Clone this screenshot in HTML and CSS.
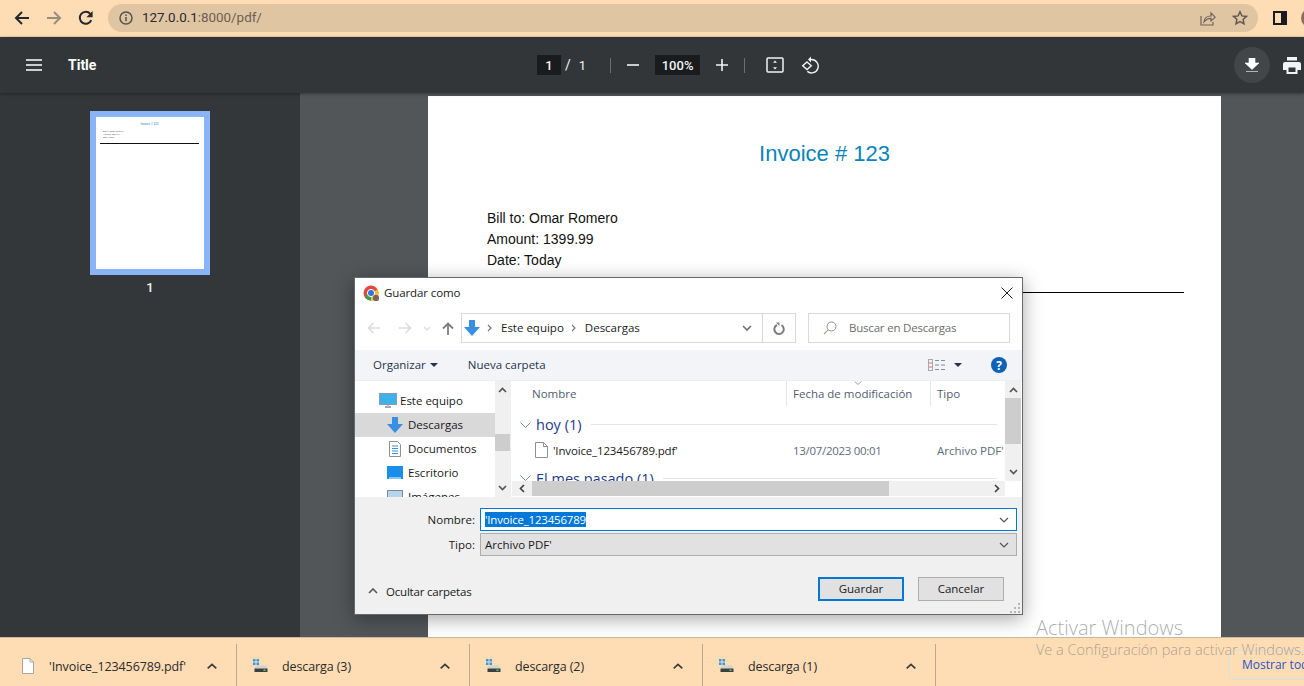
FILE: index.html
```html
<!DOCTYPE html>
<html lang="en">
  <head>
    <meta charset="UTF-8" />
    <title>Guardar como</title>
    <link rel="stylesheet" href="styles.css">
  </head>
  <body>
    <header class="browser-bar">
      <svg class="nav-icon" width="16" height="16" viewBox="0 0 16 16"><path d="M15 8H2M8 2 2 8l6 6" fill="none" stroke="#26282b" stroke-width="2"/></svg>
      <svg class="nav-icon" width="16" height="16" viewBox="0 0 16 16"><path d="M1 8h13M8 2l6 6-6 6" fill="none" stroke="#9b8c7b" stroke-width="2"/></svg>
      <svg class="nav-icon" width="16" height="16" viewBox="0 0 16 16"><path d="M13.3 10.2A6 6 0 1 1 12.3 3.8" fill="none" stroke="#26282b" stroke-width="2"/><path d="M14.6 1v6.2H8.4z" fill="#26282b"/></svg>
      <div class="omnibox">
        <svg width="14" height="14" viewBox="0 0 14 14"><circle cx="7" cy="7" r="6" fill="none" stroke="#55534f" stroke-width="1.5"/><path d="M7 6v4.2M7 3.6v1.3" stroke="#55534f" stroke-width="1.5"/></svg>
        <span class="url"><b>127.0.0.1</b>:8000/pdf/</span>
        <svg class="share" width="16" height="16" viewBox="0 0 16 16"><path d="M1 6v9h12v-3" fill="none" stroke="#6d665d" stroke-width="1.2"/><path d="M4 12c.4-4 3-6 7-6V3l4.200 4.200L11 11V8.300c-3 0-5 1-7 3.700z" fill="none" stroke="#6d665d" stroke-width="1.200"/></svg>
        <svg class="star" width="16" height="16" viewBox="0 0 16 16"><path d="m8 1.800 1.900 4.100 4.500.5-3.300 3 .9 4.400L8 11.600l-4 2.200.9-4.400-3.300-3 4.500-.5z" fill="none" stroke="#5f5a53" stroke-width="1.500"/></svg>
      </div>
      <span class="side-panel"></span>
      <span class="avatar"></span>
    </header>

    <div class="pdf-toolbar">
      <svg class="burger" width="16" height="12" viewBox="0 0 16 12"><path d="M0 1h16M0 6h16M0 11h16" stroke="#fff" stroke-width="1.600"/></svg>
      <span class="doc-title">Title</span>
      <span class="field page-field">1</span>
      <span class="slash">/</span>
      <span class="page-count">1</span>
      <span class="tb-sep first-sep"></span>
      <svg class="minus" width="12" height="12" viewBox="0 0 12 12"><path d="M0 6h12" stroke="#f1f3f4" stroke-width="1.600"/></svg>
      <span class="field zoom-field">100%</span>
      <svg class="plus" width="12" height="12" viewBox="0 0 12 12"><path d="M0 6h12M6 0v12" stroke="#f1f3f4" stroke-width="1.600"/></svg>
      <span class="tb-sep second-sep"></span>
      <svg class="fit" width="18" height="16" viewBox="0 0 18 16"><rect x="1" y="1" width="16" height="14" rx="1" fill="none" stroke="#f1f3f4" stroke-width="1.500"/><path d="m9 3.500 2 2.300H7zM9 12.500l2-2.300H7z" fill="#f1f3f4"/></svg>
      <svg class="rotate" width="19" height="18" viewBox="0 0 19 18"><path d="M9 3.500h1.500a6.700 6.700 0 1 1-4.200 11.900" fill="none" stroke="#f1f3f4" stroke-width="1.400"/><path d="M10 .5v6L7 3.500z" fill="#f1f3f4"/><path d="m6 6 4.300 3.800L6 13.600 1.700 9.800z" fill="none" stroke="#f1f3f4" stroke-width="1.400"/></svg>
      <span class="download-btn">
        <svg width="14" height="15" viewBox="0 0 14 15"><path d="M4 0h6v5h4l-7 6.500L0 5h4zM1 13.500h12" fill="#fff" stroke="#fff" stroke-width=".6"/></svg>
      </span>
      <svg class="print" width="18" height="17" viewBox="0 0 18 17"><path d="M4 0h10v3.500H4zM2 5h14a2 2 0 0 1 2 2v6h-3.500v4h-11v-4H0V7a2 2 0 0 1 2-2z" fill="#f1f3f4"/><path d="M5.500 10.500h7v4.500h-7z" fill="#323639"/></svg>
    </div>

    <main class="viewer">
      <aside class="sidebar">
        <div class="thumb">
          <div class="thumb-title">Invoice # 123</div>
          <div class="thumb-line">Bill to: Omar Romero</div>
          <div class="thumb-line">Amount: 1399.99</div>
          <div class="thumb-line">Date: Today</div>
          <div class="thumb-rule"></div>
        </div>
        <div class="thumb-label">1</div>
      </aside>
      <section class="pdf-area">
        <article class="pdf-page">
          <h1 class="invoice-title">Invoice # 123</h1>
          <p class="invoice-line">Bill to: Omar Romero</p>
          <p class="invoice-line">Amount: 1399.99</p>
          <p class="invoice-line">Date: Today</p>
          <hr class="invoice-rule" />
        </article>
      </section>
    </main>

    <footer class="shelf">
      <div class="shelf-item first-item">
        <svg class="shelf-file" width="12" height="16" viewBox="0 0 12 16"><path d="M.5.500h7.500l3.500 3.500v11.500H.5z" fill="#fff" stroke="#a6a6a6"/><path d="M8 .5V4h3.500" fill="none" stroke="#a6a6a6"/></svg>
        <span class="shelf-name">'Invoice_123456789.pdf'</span>
        <svg class="shelf-chev" width="10" height="6" viewBox="0 0 10 6"><path d="m.7 5.300 4.300-4 4.300 4" fill="none" stroke="#3a3a3a" stroke-width="1.700"/></svg>
      </div>
      <div class="shelf-item">
        <svg class="shelf-drive" width="16" height="14" viewBox="0 0 16 14"><path d="M0 0h2.500v2.500H0zM3.500 0H6v2.500H3.500zM0 3.500h2.500V6H0zM3.500 3.500H6V6H3.500z" fill="#2f9be8"/><path d="M3 6.500h10l1.500 3H1.500z" fill="#d2d2d2"/><path d="M1.500 9.500h13v3.500h-13z" fill="#3c3f3f"/><path d="M10.500 10.500h2V12h-2z" fill="#55d36b"/></svg>
        <span class="shelf-name">descarga (3)</span>
        <svg class="shelf-chev" width="10" height="6" viewBox="0 0 10 6"><path d="m.7 5.300 4.300-4 4.300 4" fill="none" stroke="#3a3a3a" stroke-width="1.700"/></svg>
      </div>
      <div class="shelf-item">
        <svg class="shelf-drive" width="16" height="14" viewBox="0 0 16 14"><path d="M0 0h2.500v2.500H0zM3.500 0H6v2.500H3.500zM0 3.500h2.500V6H0zM3.500 3.500H6V6H3.500z" fill="#2f9be8"/><path d="M3 6.500h10l1.500 3H1.500z" fill="#d2d2d2"/><path d="M1.500 9.500h13v3.500h-13z" fill="#3c3f3f"/><path d="M10.500 10.500h2V12h-2z" fill="#55d36b"/></svg>
        <span class="shelf-name">descarga (2)</span>
        <svg class="shelf-chev" width="10" height="6" viewBox="0 0 10 6"><path d="m.7 5.300 4.300-4 4.300 4" fill="none" stroke="#3a3a3a" stroke-width="1.700"/></svg>
      </div>
      <div class="shelf-item">
        <svg class="shelf-drive" width="16" height="14" viewBox="0 0 16 14"><path d="M0 0h2.500v2.500H0zM3.500 0H6v2.500H3.500zM0 3.500h2.500V6H0zM3.500 3.500H6V6H3.500z" fill="#2f9be8"/><path d="M3 6.500h10l1.500 3H1.500z" fill="#d2d2d2"/><path d="M1.500 9.500h13v3.500h-13z" fill="#3c3f3f"/><path d="M10.500 10.500h2V12h-2z" fill="#55d36b"/></svg>
        <span class="shelf-name">descarga (1)</span>
        <svg class="shelf-chev" width="10" height="6" viewBox="0 0 10 6"><path d="m.7 5.300 4.300-4 4.300 4" fill="none" stroke="#3a3a3a" stroke-width="1.700"/></svg>
      </div>
      <span class="show-all">Mostrar todo</span>
    </footer>

    <div class="watermark">
      <div class="wm-big">Activar Windows</div>
      <div class="wm-small">Ve a Configuración para activar Windows.</div>
    </div>

    <div class="dialog">
      <div class="dlg-title">
        <svg width="16" height="16" viewBox="0 0 16 16">
          <circle cx="8" cy="8" r="7.500" fill="#e2483c"/>
          <path d="M8 8 1.500 11.800A7.500 7.500 0 0 0 8 15.500z" fill="#3c9e50"/>
          <path d="M8 8v7.500A7.500 7.500 0 0 0 15.500 8 7 7 0 0 0 14.500 4.500z" fill="#f3c033"/>
          <circle cx="8" cy="8" r="3.600" fill="#2f75e0" stroke="#fff" stroke-width="1"/>
          <rect x="10" y="10" width="6" height="6" rx="2" fill="#80635a"/>
        </svg>
        <span>Guardar como</span>
        <svg class="dlg-close" width="12" height="12" viewBox="0 0 12 12"><path d="m.5.500 11 11M11.500.500l-11 11" stroke="#1a1a1a" stroke-width="1"/></svg>
      </div>

      <div class="dlg-nav">
        <svg class="hist" width="14" height="12" viewBox="0 0 14 12"><path d="M13 6H2M6.500 1 1.500 6l5 5" fill="none" stroke="#dcdcdc" stroke-width="1.600"/></svg>
        <svg class="hist hist-fwd" width="14" height="12" viewBox="0 0 14 12"><path d="M1 6h11M7.500 1l5 5-5 5" fill="none" stroke="#dcdcdc" stroke-width="1.600"/></svg>
        <svg class="hist hist-down" width="8" height="5" viewBox="0 0 8 5"><path d="m1 1 3 3 3-3" fill="none" stroke="#dcdcdc" stroke-width="1.400"/></svg>
        <svg class="hist hist-up" width="12" height="13" viewBox="0 0 12 13"><path d="M6 13V2M1 6.500l5-5 5 5" fill="none" stroke="#7d7d7d" stroke-width="1.800"/></svg>
        <div class="addr">
          <svg width="16" height="16" viewBox="0 0 16 16"><path d="M5 0h6v7h5l-8 9-8-9h5z" fill="#3a8fe0"/></svg>
          <svg class="crumb" width="5" height="8" viewBox="0 0 5 8"><path d="m1 1 3 3-3 3" fill="none" stroke="#7a7a7a" stroke-width="1.200"/></svg>
          <span class="addr-text">Este equipo</span>
          <svg class="crumb" width="5" height="8" viewBox="0 0 5 8"><path d="m1 1 3 3-3 3" fill="none" stroke="#7a7a7a" stroke-width="1.200"/></svg>
          <span class="addr-text">Descargas</span>
          <svg class="addr-chev" width="10" height="6" viewBox="0 0 10 6"><path d="m1 1 4 4 4-4" fill="none" stroke="#6d6d6d" stroke-width="1.600"/></svg>
          <span class="addr-refresh">
            <svg width="12" height="13" viewBox="0 0 12 13"><path d="M8.500 3.200a4.700 4.700 0 1 1-4.500-.2" fill="none" stroke="#7d7d7d" stroke-width="2"/><path d="M3 .5h3.500V4z" fill="#7d7d7d"/></svg>
          </span>
        </div>
        <div class="search">
          <svg width="14" height="14" viewBox="0 0 14 14"><circle cx="8.500" cy="5.500" r="4.500" fill="none" stroke="#8f8f8f"/><path d="M5.200 8.800 1 13" stroke="#c09a7a" stroke-width="1.200"/></svg>
          <span>Buscar en Descargas</span>
        </div>
      </div>

      <div class="dlg-tools">
        <span class="tool-link">Organizar</span>
        <span class="tri"></span>
        <span class="tool-link new-folder">Nueva carpeta</span>
        <svg class="views" width="17" height="12" viewBox="0 0 17 12"><rect x=".5" y=".5" width="4" height="11" fill="none" stroke="#a8a8a8"/><path d="M1 4h3M1 8h3" stroke="#d0717a"/><path d="M7 1.500h4M13 1.500h4M7 6h4M13 6h4M7 10.500h4M13 10.500h4" stroke="#7f8d9c"/></svg>
        <span class="tri views-tri"></span>
        <span class="help">?</span>
      </div>

      <div class="dlg-body">
        <div class="tree">
          <div class="tree-row tree-pc">
            <svg width="18" height="16" viewBox="0 0 18 16"><rect x=".5" y=".5" width="17" height="11" fill="#3fb0ea" stroke="#8a9aa8"/><path d="M6 14h6" stroke="#9aa6b2" stroke-width="2"/><path d="M8 12h2v2H8z" fill="#b8c2cc"/></svg>
            <span>Este equipo</span>
          </div>
          <div class="tree-row selected">
            <svg width="16" height="16" viewBox="0 0 16 16"><path d="M5 0h6v7h5l-8 9-8-9h5z" fill="#3a8fe0"/></svg>
            <span>Descargas</span>
          </div>
          <div class="tree-row">
            <svg width="16" height="16" viewBox="0 0 16 16"><path d="M2.500.5h8l3 3v12h-11z" fill="#fff" stroke="#8f8f8f"/><path d="M5 5h6M5 7.500h6M5 10h6M5 12.500h6" stroke="#3d8fd8"/></svg>
            <span>Documentos</span>
          </div>
          <div class="tree-row">
            <svg width="16" height="14" viewBox="0 0 16 14"><rect width="16" height="13" fill="#1a8ee8"/><path d="M2 12h12" stroke="#fff"/></svg>
            <span>Escritorio</span>
          </div>
          <div class="tree-row">
            <svg width="16" height="14" viewBox="0 0 16 14"><rect x=".5" y=".5" width="15" height="13" fill="#b7d4ee" stroke="#7a8a9a"/></svg>
            <span>Imágenes</span>
          </div>
        </div>
        <div class="vscroll tree-scroll">
          <svg width="9" height="6" viewBox="0 0 9 6"><path d="m1 5 3.500-3.500L8 5" fill="none" stroke="#555" stroke-width="1.700"/></svg>
          <span class="vthumb"></span>
          <svg class="vdown" width="9" height="6" viewBox="0 0 9 6"><path d="m1 1 3.500 3.500L8 1" fill="none" stroke="#555" stroke-width="1.700"/></svg>
        </div>
        <div class="files">
          <div class="files-view">
            <div class="col-head">
              <span class="col col-name">Nombre</span>
              <span class="col col-date">Fecha de modificación</span>
              <span class="col col-type">Tipo</span>
              <svg class="sort" width="8" height="4" viewBox="0 0 8 4"><path d="m.5.500 3.500 3 3.500-3" fill="none" stroke="#a8a8a8"/></svg>
            </div>
            <div class="group">
              <svg width="11" height="6" viewBox="0 0 11 6"><path d="m.5.500 5 5 5-5" fill="none" stroke="#7d8794"/></svg>
              <span>hoy (1)</span>
              <i></i>
            </div>
            <div class="file-row">
              <svg width="13" height="16" viewBox="0 0 13 16"><path d="M.5.500h8l4 4v11H.5z" fill="#fff" stroke="#8f8f8f"/><path d="M8.500.5v4h4" fill="none" stroke="#8f8f8f"/></svg>
              <span class="file-name">'Invoice_123456789.pdf'</span>
              <span class="file-date">13/07/2023 00:01</span>
              <span class="file-type">Archivo PDF'</span>
            </div>
            <div class="group group-month">
              <svg width="11" height="6" viewBox="0 0 11 6"><path d="m.5.500 5 5 5-5" fill="none" stroke="#7d8794"/></svg>
              <span>El mes pasado (1)</span>
              <i></i>
            </div>
          </div>
          <div class="hscroll">
            <svg class="hleft" width="6" height="9" viewBox="0 0 6 9"><path d="M5 1 1.500 4.500 5 8" fill="none" stroke="#444" stroke-width="1.700"/></svg>
            <span class="hthumb"></span>
            <svg class="hright" width="6" height="9" viewBox="0 0 6 9"><path d="m1 1 3.500 3.500L1 8" fill="none" stroke="#444" stroke-width="1.700"/></svg>
          </div>
        </div>
        <div class="vscroll list-scroll">
          <svg width="9" height="6" viewBox="0 0 9 6"><path d="m1 5 3.500-3.500L8 5" fill="none" stroke="#555" stroke-width="1.700"/></svg>
          <span class="vthumb"></span>
          <svg class="vdown" width="9" height="6" viewBox="0 0 9 6"><path d="m1 1 3.500 3.500L8 1" fill="none" stroke="#555" stroke-width="1.700"/></svg>
          <span class="corner"></span>
        </div>
      </div>

      <div class="dlg-foot">
        <div class="form-grid">
          <label>Nombre:</label>
          <div class="combo combo-name">
            <span class="sel">'Invoice_123456789</span>
            <svg width="10" height="6" viewBox="0 0 10 6"><path d="m1 1 4 4 4-4" fill="none" stroke="#555" stroke-width="1.200"/></svg>
          </div>
          <label>Tipo:</label>
          <div class="combo combo-type">
            <span>Archivo PDF'</span>
            <svg width="10" height="6" viewBox="0 0 10 6"><path d="m1 1 4 4 4-4" fill="none" stroke="#555" stroke-width="1.200"/></svg>
          </div>
        </div>
        <div class="foot-actions">
          <svg class="hide-chev" width="10" height="6" viewBox="0 0 10 6"><path d="m1 5 4-4 4 4" fill="none" stroke="#555" stroke-width="1.600"/></svg>
          <span class="hide-folders">Ocultar carpetas</span>
          <button class="btn btn-default">Guardar</button>
          <button class="btn">Cancelar</button>
        </div>
        <svg class="grip" width="11" height="11" viewBox="0 0 11 11"><path d="M8 0h2v2H8zM4 4h2v2H4zM8 4h2v2H8zM0 8h2v2H0zM4 8h2v2H4zM8 8h2v2H8z" fill="#b5b5b5"/></svg>
      </div>
    </div>
  </body>
</html>
```

FILE: styles.css
```css
* {
  box-sizing: border-box;
}
html,
body {
  margin: 0;
  height: 686px;
  overflow: hidden;
}
body {
  position: relative;
  display: flex;
  flex-direction: column;
  width: 1304px;
  font-family: Roboto, sans-serif;
  background: #525659;
}
svg {
  display: block;
  flex: none;
}

/* browser bar */
.browser-bar {
  display: flex;
  align-items: center;
  height: 37px;
  flex: none;
  padding: 0 0 1px 14px;
  background: #fedcb4;
  border-bottom: 1px solid #f0d2ad;
}
.nav-icon {
  margin-right: 16px;
}
.omnibox {
  display: flex;
  align-items: center;
  width: 1150px;
  height: 28px;
  flex: none;
  margin-left: -2px;
  padding-left: 11px;
  border-radius: 14px;
  background: #dfc5a2;
}
.url {
  margin-left: 9px;
  font-size: 13.400px;
  color: #6a5f52;
}
.url b {
  font-weight: 400;
  color: #2a2a2e;
}
.share {
  margin-left: auto;
  margin-right: 16px;
}
.star {
  margin-right: 10px;
}
.side-panel {
  width: 14px;
  height: 14px;
  flex: none;
  margin-left: 15px;
  border: 2px solid #1b1b1f;
  border-right-width: 6px;
  background: #fedcb4;
}
.avatar {
  width: 20px;
  height: 20px;
  margin-left: 14px;
  flex: none;
  border-radius: 50%;
  background: #8b6b60;
}

/* pdf toolbar */
.pdf-toolbar {
  display: flex;
  align-items: center;
  height: 56px;
  flex: none;
  padding-left: 26px;
  background: #323639;
  color: #f1f3f4;
  font-size: 13px;
  box-shadow: 0 1px 3px rgba(0, 0, 0, 0.35);
  position: relative;
  z-index: 1;
}
.doc-title {
  width: 469px;
  margin-left: 26px;
  font-size: 14px;
  font-weight: 700;
  color: #fff;
}
.field {
  display: flex;
  align-items: center;
  justify-content: center;
  height: 20px;
  background: #191b1c;
  font-size: 13px;
  font-weight: 500;
}
.page-field {
  width: 24px;
}
.slash {
  margin-left: 4px;
  font-size: 14px;
}
.page-count {
  margin-left: 8px;
}
.tb-sep {
  width: 1px;
  height: 15px;
  background: #6b6f72;
}
.first-sep {
  margin-left: 24px;
}
.minus {
  margin-left: 16px;
}
.zoom-field {
  width: 45px;
  margin-left: 16px;
}
.plus {
  margin-left: 16px;
}
.second-sep {
  margin-left: 16px;
}
.fit {
  margin-left: 21px;
}
.rotate {
  margin-left: 17px;
}
.download-btn {
  display: flex;
  align-items: center;
  justify-content: center;
  width: 36px;
  height: 36px;
  margin-left: 414px;
  flex: none;
  border-radius: 50%;
  background: #424649;
}
.print {
  margin-left: 13px;
}

/* viewer */
.viewer {
  display: flex;
  flex: 1;
  min-height: 0;
}
.sidebar {
  width: 300px;
  flex: none;
  padding: 18px 0 0 90px;
  background: #33373a;
}
.thumb {
  width: 120px;
  height: 164px;
  padding: 5px 5px 0 4px;
  border: 6px solid #8ab4f8;
  background: #fff;
  overflow: hidden;
}
.thumb-title {
  margin-bottom: 4px;
  text-align: center;
  font: 3px "Liberation Sans", sans-serif;
  color: #0b85b8;
}
.thumb-line {
  height: 3px;
  margin-left: 3px;
  font: 2.200px/3px "Liberation Sans", sans-serif;
  color: #444;
}
.thumb-rule {
  height: 1px;
  margin-top: 4px;
  background: #111;
}
.thumb-label {
  width: 120px;
  margin-top: 5px;
  text-align: center;
  font-size: 13px;
  font-weight: 500;
  color: #f1f3f4;
}
.pdf-area {
  flex: 1;
  padding: 3px 83px 0 128px;
  min-width: 0;
}
.pdf-page {
  height: 600px;
  padding: 44px 37px 0 59px;
  background: #fff;
  font-family: "Liberation Sans", Arial, sans-serif;
}
.invoice-title {
  margin: 0 0 40px;
  font-size: 22px;
  line-height: 28px;
  font-weight: 400;
  text-align: center;
  color: #0a84b8;
  transform: translateX(-11px);
}
.invoice-line {
  margin: 0;
  font-size: 14px;
  line-height: 21px;
  color: #111;
}
.invoice-rule {
  height: 1px;
  margin: 21px 0 0 -29px;
  border: 0;
  background: #000;
}

/* downloads shelf */
.shelf {
  display: flex;
  flex: none;
  height: 49px;
  padding-top: 6px;
  border-top: 1px solid #c9b79e;
  background: #fedcb4;
  font-family: "Open Sans", sans-serif;
  font-size: 12.500px;
  color: #2b2b2b;
  position: relative;
}
.shelf-item {
  display: flex;
  align-items: center;
  width: 233px;
  flex: none;
  padding: 2px 19px 0 16px;
  border-right: 1px solid #bda78d;
}
.first-item {
  width: 237px;
  padding-left: 22px;
}
.shelf-name {
  margin-left: 15px;
  letter-spacing: -0.1px;
}
.shelf-drive + .shelf-name {
  margin-left: 13px;
}
.shelf-chev {
  margin-left: auto;
}
.show-all {
  align-self: flex-start;
  flex: none;
  height: 30px;
  margin: 6px 0 0 293px;
  padding: 6px 12px 0;
  border: 1px solid #d7dfe8;
  border-radius: 4px;
  font-size: 12px;
  line-height: 16px;
  white-space: nowrap;
  color: #2a52c9;
}

.watermark {
  position: absolute;
  left: 1036px;
  top: 615px;
  width: 290px;
  font-family: "Open Sans", sans-serif;
  font-weight: 300;
  color: rgba(120, 120, 120, 0.62);
}
.wm-big {
  font-size: 20px;
  line-height: 25px;
}
.wm-small {
  margin-top: 3px;
  font-size: 14.500px;
  line-height: 14px;
  white-space: nowrap;
}

/* save dialog */
.dialog {
  position: absolute;
  left: 354px;
  top: 277px;
  display: flex;
  flex-direction: column;
  width: 669px;
  height: 338px;
  border: 1px solid #66696c;
  background: #fff;
  box-shadow: 0 4px 18px rgba(0, 0, 0, 0.35);
  font-family: "Open Sans", sans-serif;
  font-size: 11.500px;
  color: #1a1a1a;
}
.dlg-title {
  display: flex;
  align-items: center;
  height: 29px;
  flex: none;
  padding-left: 8px;
  font-size: 11.500px;
  letter-spacing: -0.1px;
}
.dlg-title span {
  margin-left: 5px;
}
.dlg-close {
  margin-left: auto;
  margin-right: 9px;
}
.dlg-nav {
  display: flex;
  align-items: center;
  height: 30px;
  margin-top: 6px;
  flex: none;
  padding-left: 12px;
}
.hist-fwd {
  margin-left: 17px;
}
.hist-down {
  margin-left: 11px;
}
.hist-up {
  margin-left: 11px;
}
.addr {
  display: flex;
  align-items: center;
  gap: 7px;
  width: 335px;
  height: 30px;
  margin-left: 7px;
  padding-left: 2px;
  border: 1px solid #d9d9d9;
}
.addr-text {
  margin: -2px 0 0 2px;
}
.addr-chev {
  margin-left: auto;
  margin-right: 3px;
}
.addr-refresh {
  display: flex;
  align-items: center;
  justify-content: center;
  width: 33px;
  height: 100%;
  border-left: 1px solid #d9d9d9;
}
.search {
  display: flex;
  align-items: center;
  gap: 12px;
  width: 202px;
  height: 30px;
  margin-left: 12px;
  padding-left: 14px;
  border: 1px solid #d9d9d9;
  color: #6d6d6d;
  letter-spacing: -0.2px;
}
.search span {
  margin-top: -2px;
}
.dlg-tools {
  display: flex;
  align-items: center;
  height: 30px;
  margin-top: 7px;
  flex: none;
  padding-left: 18px;
  background: #f3f4f7;
  color: #24344f;
}
.tool-link {
  margin-top: -2px;
}
.tri {
  width: 0;
  height: 0;
  margin-left: 4px;
  border: 4px solid transparent;
  border-top: 4px solid #24344f;
  border-bottom: 0;
}
.new-folder {
  margin-left: 30px;
}
.views {
  margin-left: auto;
}
.views-tri {
  margin-left: 9px;
}
.help {
  display: flex;
  align-items: center;
  justify-content: center;
  width: 16px;
  height: 16px;
  margin: 0 15px 0 29px;
  border-radius: 50%;
  background: #0f62b8;
  color: #fff;
  font-size: 12px;
  font-weight: 700;
}
.dlg-body {
  display: flex;
  height: 117px;
  flex: none;
  border-top: 1px solid #eceef0;
}
.tree {
  width: 140px;
  flex: none;
  padding-top: 8px;
  overflow: hidden;
}
.tree-row {
  display: flex;
  align-items: center;
  gap: 5px;
  height: 24px;
  padding-left: 32px;
}
.tree-row span {
  margin-top: -2px;
}
.tree-pc {
  gap: 3px;
  padding-left: 24px;
}
.selected {
  background: #d9d9d9;
}
.vscroll {
  display: flex;
  flex-direction: column;
  align-items: center;
  width: 15px;
  flex: none;
  padding-top: 6px;
  background: #f0f0f0;
  position: relative;
}
.tree-scroll .vthumb {
  height: 17px;
  margin-top: 41px;
}
.vthumb {
  display: block;
  width: 100%;
  background: #cdcdcd;
}
.vdown {
  margin-top: auto;
  margin-bottom: 6px;
}
.list-scroll {
  width: 16px;
  background: #f0f0f0;
}
.list-scroll .vthumb {
  height: 46px;
  margin-top: 5px;
}
.list-scroll .vdown {
  margin-bottom: 22px;
}
.corner {
  position: absolute;
  left: 0;
  bottom: 0;
  width: 100%;
  height: 16px;
  background: #fff;
}
.files {
  display: flex;
  flex-direction: column;
  width: 495px;
  flex: none;
  padding-left: 1px;
  border-left: 1px solid #eceef0;
  background: #fff;
}
.files-view {
  height: 100px;
  flex: none;
  overflow: hidden;
}
.col-head {
  display: flex;
  align-items: center;
  height: 25px;
  position: relative;
  color: #4f5d70;
}
.col {
  height: 100%;
  line-height: 25px;
}
.col-name {
  width: 274px;
  padding-left: 20px;
}
.col-date {
  width: 144px;
  padding-left: 6px;
  border-left: 1px solid #e5e5e5;
}
.col-type {
  padding-left: 6px;
  border-left: 1px solid #e5e5e5;
}
.sort {
  position: absolute;
  left: 342px;
  top: 0;
}
.group {
  display: flex;
  align-items: center;
  height: 37px;
  padding-left: 8px;
  font-size: 14.500px;
  color: #1e3a8a;
}
.group span {
  margin-left: 5px;
}
.group i {
  flex: 1;
  height: 1px;
  margin: 0 8px 0 9px;
  background: #e5e5e5;
}
.group-month {
  height: 22px;
  margin-top: 10px;
}
.file-row {
  display: flex;
  align-items: center;
  height: 14px;
  padding-left: 23px;
}
.file-name {
  width: 240px;
  margin-left: 5px;
  letter-spacing: -0.15px;
}
.file-date {
  width: 144px;
  letter-spacing: -0.3px;
  color: #5f6b7a;
}
.file-type {
  color: #5f6b7a;
  white-space: nowrap;
}
.hscroll {
  display: flex;
  align-items: center;
  height: 15px;
  padding-left: 7px;
  background: #f0f0f0;
}
.hthumb {
  width: 357px;
  height: 100%;
  margin-left: 7px;
  background: #cdcdcd;
}
.hright {
  margin-left: 105px;
}
.dlg-foot {
  flex: 1;
  position: relative;
  padding: 11px 5px 0 0;
  background: #f0f0f0;
}
.form-grid {
  display: grid;
  grid-template-columns: 125px 1fr;
  grid-auto-rows: 23px;
  gap: 2px 0;
  align-items: center;
}
.form-grid label {
  padding-right: 5px;
  text-align: right;
}
.combo {
  display: flex;
  align-items: center;
  justify-content: space-between;
  height: 23px;
  padding: 0 7px 0 4px;
}
.combo-name {
  border: 1px solid #0078d7;
  background: #fff;
}
.combo-type {
  border: 1px solid #adadad;
  background: #e1e1e1;
}
.sel {
  background: #0078d7;
  color: #fff;
  line-height: 15px;
  letter-spacing: -0.2px;
}
.foot-actions {
  display: flex;
  align-items: center;
  height: 24px;
  margin-top: 21px;
  padding-left: 13px;
}
.hide-chev {
  margin-top: 4px;
}
.hide-folders {
  margin: 4px 0 0 8px;
  letter-spacing: -0.2px;
}
.btn {
  width: 86px;
  height: 24px;
  padding: 0 0 2px;
  border: 1px solid #adadad;
  background: #e1e1e1;
  font: inherit;
  color: inherit;
}
.btn-default {
  margin-left: auto;
  margin-right: 14px;
  border: 2px solid #0078d7;
}
.foot-actions .btn:last-child {
  margin-right: 13px;
}
.grip {
  position: absolute;
  right: 1px;
  bottom: 0;
}
```
